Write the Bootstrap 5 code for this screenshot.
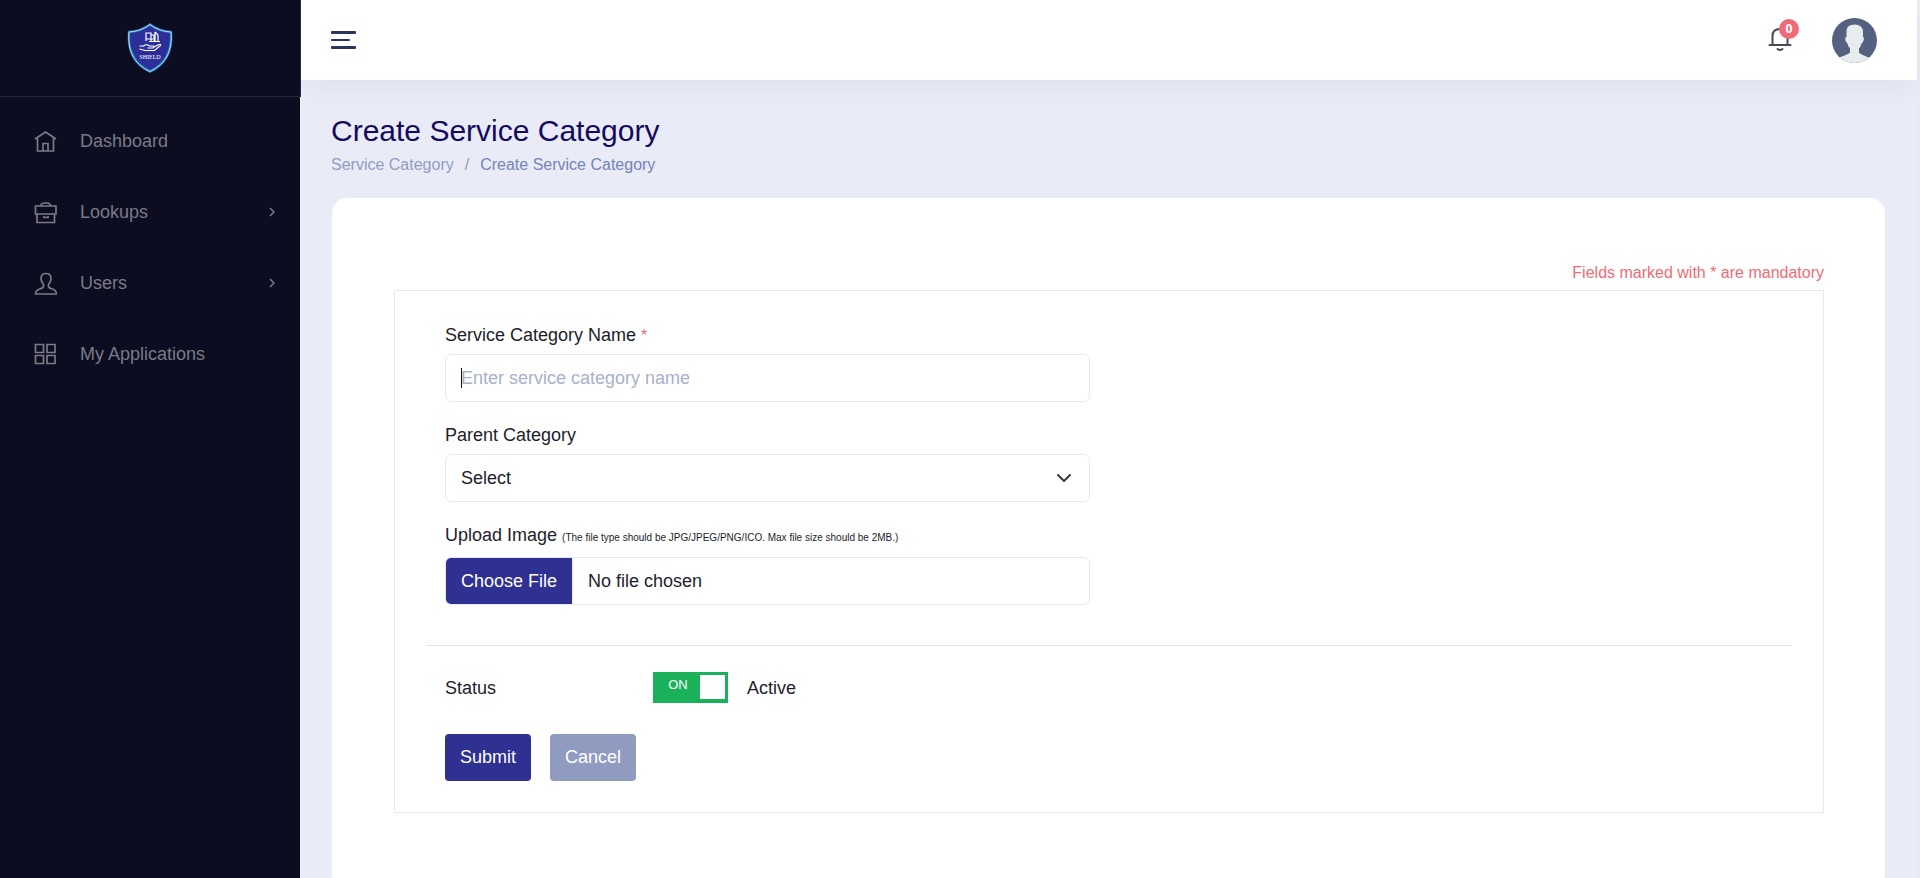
<!DOCTYPE html>
<html lang="en">
<head>
<meta charset="utf-8">
<meta name="viewport" content="width=device-width, initial-scale=1">
<title>Create Service Category</title>
<link href="https://cdn.jsdelivr.net/npm/bootstrap@5.3.0/dist/css/bootstrap.min.css" rel="stylesheet">
<style>
  :root { --brand: #2e3092; --line: #e9e7f7; }
  html { background: #e9e8f6; }
  body { background: #e9e8f6; color: #1d1d2b; font: 18px/24px "Liberation Sans", Arial, sans-serif; padding-right: 3px; }
  a { text-decoration: none; }

  .side { width: 300px; background: #0c0d20; }
  .brand-box { width: 301px; height: 97px; background: #0c0d20; border-right: 1px solid #2b2c3e; border-bottom: 1px solid #25263a; z-index: 2; }
  .side .nav-link { height: 71px; padding: 0 25px 0 33px; color: #7b7b86; }
  .side .nav-link:hover { color: #fff; }
  .side .nav-link svg { fill: none; stroke: currentColor; }
  .side .menu-icon { margin-right: 23px; }

  .page-area { background: #e9ebf7; }
  .topbar { height: 80px; padding: 0 40px 0 31px; background: #fff; box-shadow: 0 16px 28px -8px rgba(40, 40, 70, .05); }
  .count { left: 11px; top: -9px; width: 20px; height: 20px; font: bold 12px/20px "Open Sans", sans-serif; background: #f06b75; }

  .content-area { padding: 33px 32px 0 31px; }
  .page-title { font-size: 30px; line-height: 36px; color: #130a5f; }
  .breadcrumb { --bs-breadcrumb-divider-color: #8f9bc0; --bs-breadcrumb-item-padding-x: 11px; font-size: 16px; margin: 4px 0 21px; }
  .breadcrumb a { color: #919dc2; }
  .breadcrumb .active { color: #7584b8; }

  .panel { border: 0; border-radius: 15px 15px 0 0; padding: 63px 61px 66px 62px; margin-left: 1px; }
  .mandatory { font-size: 16px; color: #f06b75; margin-bottom: 5px; }
  .star { font-size: 16px; line-height: 16px; color: #f06b75; }
  .form-box { border: 1px solid var(--line); padding: 32px 31px 31px; }
  .form-box .row { --bs-gutter-x: 38px; margin: 0; }
  .form-box .field { margin-bottom: 21px; }
  .field-name { display: block; margin-bottom: 7px; }
  .hint { font-size: 10px; line-height: 24px; }
  .form-control, .form-select { height: 48px; padding: 9px 15px; font-size: 18px; line-height: 28px; color: #1d1d2b; border-color: var(--line); border-radius: 6px; }
  .form-control::placeholder { color: #a9b0cb; opacity: 1; }
  .with-caret { background: linear-gradient(#111, #111) 15px center / 1px 20px no-repeat #fff; }
  .form-select { background-position: right 17px center; background-size: 16px 16px; }
  .form-control::file-selector-button { margin: -9px 15px -9px -15px; padding: 9px 15px; background: var(--brand); color: #fff; border-color: var(--line); }
  .form-control:hover:not(:disabled):not([readonly])::file-selector-button { background: #25277c; }
  .divider { margin: 40px 0 26px; border-color: #e2e2e8; opacity: 1; }

  .status-name { width: 208px; }
  .switch-box { width: 75px; height: 31px; padding: 3px; margin-right: 19px; background: #c9ccd8; cursor: pointer; }
  .switch-box::after { content: "OFF"; order: 1; flex: 1; font-size: 13px; line-height: 20px; text-align: center; color: #fff; }
  .switch-box .knob { width: 25px; height: 24px; background: #fff; }
  .btn-check:checked + .switch-box { background: #1ab15a; }
  .btn-check:checked + .switch-box::after { content: "ON"; order: 0; }
  .btn-check:checked + .switch-box .knob { order: 1; }

  .form-actions { gap: 19px; margin-top: 31px; }
  .btn-form { width: 86px; height: 47px; padding: 0; font-size: 18px; border: 0; border-radius: 4px; color: #fff; background: var(--brand); }
  .btn-form.btn-soft { background: #909bc0; }
</style>
</head>
<body class="min-vh-100 d-flex">

<aside class="side flex-shrink-0 d-flex flex-column">
  <a href="#" class="brand-box position-relative d-flex align-items-center justify-content-center" aria-label="Shield home">
    <svg width="50" height="54" viewBox="0 0 50 54">
      <path d="M25 3.500C19 8 12 10.500 4 11C2.500 30 9 43 25 50.500C41 43 47.500 30 46 11C38 10.500 31 8 25 3.500Z" fill="#2c2f9a" stroke="#2473b8" stroke-width="2.500"/>
      <path d="M25 3.500C19 8 12 10.500 4 11C2.500 30 9 43 25 50.500C41 43 47.500 30 46 11C38 10.500 31 8 25 3.500Z" fill="none" stroke="#b5e3f5" stroke-width="1"/>
      <path d="M21 20v-8h5v8M21 18h7M26 14h3v6M30 11v9M33 14v6M30 11l3 3M24 20.500h11" fill="none" stroke="#fff" stroke-width="1.200"/>
      <path d="M14.500 25h4q3-2.500 6 0h4q1.500 1.500-1 2h-5M29 26l5-2.500q2-.5 1.500 1l-6 5H20l-5.500-1.500" fill="none" stroke="#fff" stroke-width="1.200"/>
      <text x="25" y="38" text-anchor="middle" font-family="Liberation Serif, serif" font-size="6" fill="#fff">SHIELD</text>
    </svg>
  </a>
  <nav class="nav flex-column pt-2" aria-label="Main">
    <a class="nav-link d-flex align-items-center" href="#">
      <svg class="menu-icon" width="24" height="24" stroke-width="1.700"><path d="M2 10L12.500 3L23 10M4.500 9v13h16V9M10 22v-7.500h5v7.500"/></svg>
      Dashboard
    </a>
    <a class="nav-link d-flex align-items-center" href="#">
      <svg class="menu-icon" width="24" height="24" stroke-width="1.700"><path d="M2.500 6h20.500v8h-20.500zM4 14v8.500h17.500v-8.500M7.500 6q1-3 4-3h2.500q3 0 4 3M11 16v1.500h4v-1.500"/></svg>
      <span class="flex-grow-1">Lookups</span>
      <svg width="6" height="10" stroke-width="1.500"><path d="M1 1l4 4-4 4"/></svg>
    </a>
    <a class="nav-link d-flex align-items-center" href="#">
      <svg class="menu-icon" width="24" height="24" stroke-width="1.700"><path d="M2.500 23q0-3.500 4-5 4-1 4-2.500v-2Q8 11 8 7.500 8 2.500 13 2.500t5 5q0 3.500-2.500 6v2q0 1.500 4 2.500 4 1.500 4 5z"/></svg>
      <span class="flex-grow-1">Users</span>
      <svg width="6" height="10" stroke-width="1.500"><path d="M1 1l4 4-4 4"/></svg>
    </a>
    <a class="nav-link d-flex align-items-center" href="#">
      <svg class="menu-icon" width="24" height="24" stroke-width="1.700"><path d="M2.500 2.500h8v8h-8zM14 2.500h8v8h-8zM2.500 13.500h8v8h-8zM14 13.500h8v8h-8z"/></svg>
      My Applications
    </a>
  </nav>
</aside>

<div class="page-area flex-grow-1 d-flex flex-column">
  <header class="topbar d-flex align-items-center">
    <button type="button" class="btn border-0 p-0 d-flex" aria-label="Toggle menu">
      <svg width="25" height="18" fill="#2d355c"><rect width="25" height="3" rx="1"/><rect y="8" width="19" height="2" rx="1"/><rect y="15" width="25" height="3" rx="1"/></svg>
    </button>
    <a href="#" class="position-relative d-flex ms-auto me-4" aria-label="Notifications">
      <svg class="me-3" width="24" height="24" fill="none" stroke="#454c55" stroke-width="2" stroke-linecap="round"><path d="M1.500 17h21M4.500 16.500v-8.500q0-7 7.500-7t7.500 7v8.500M9.500 21q2.500 2 5 0"/></svg>
      <span class="count position-absolute rounded-circle text-white text-center">0</span>
    </a>
    <a href="#" class="d-flex" aria-label="Account">
      <svg width="45" height="45" viewBox="0 0 45 45">
        <clipPath id="disc"><circle cx="22.500" cy="22.500" r="22.500"/></clipPath>
        <g clip-path="url(#disc)">
          <path fill="#566081" d="M0 0h45v45H0z"/>
          <path fill="#e7ecec" d="M14.500 14Q14 6.500 22.500 6.500T31 14v5q1.500 0 .5 3.500-.5 2-2 3-.5 3-2.500 5v4q1 1.500 11 5.500V46H7v-6.500q10-3.500 11-5v-4q-2-2-2.500-5-1.500-1-2-3-1-3.500 1-3.500z"/>
        </g>
      </svg>
    </a>
  </header>

  <main class="content-area flex-grow-1 d-flex flex-column">
    <h1 class="page-title fw-normal mb-0">Create Service Category</h1>
    <nav aria-label="breadcrumb">
      <ol class="breadcrumb">
        <li class="breadcrumb-item"><a href="#">Service Category</a></li>
        <li class="breadcrumb-item active" aria-current="page">Create Service Category</li>
      </ol>
    </nav>

    <section class="card panel flex-grow-1">
      <p class="mandatory text-end">Fields marked with * are mandatory</p>
      <form class="form-box">
        <div class="row">
          <div class="col-md-6">
            <div class="field">
              <label class="field-name" for="catName">Service Category Name <span class="star">*</span></label>
              <input type="text" class="form-control with-caret" id="catName" placeholder="Enter service category name">
            </div>
            <div class="field">
              <label class="field-name" for="parentCat">Parent Category</label>
              <select class="form-select" id="parentCat"><option>Select</option></select>
            </div>
            <label class="field-name" for="catImage">Upload Image <span class="hint">(The file type should be JPG/JPEG/PNG/ICO. Max file size should be 2MB.)</span></label>
            <input type="file" class="form-control" id="catImage">
          </div>
        </div>
        <hr class="divider">
        <div class="row">
          <div class="col-12 d-flex align-items-center">
            <span class="status-name">Status</span>
            <input type="checkbox" class="btn-check" id="status" checked>
            <label class="switch-box d-flex" for="status" aria-label="Status"><span class="knob"></span></label>
            <span>Active</span>
          </div>
          <div class="col-12 d-flex form-actions">
            <button type="submit" class="btn btn-form">Submit</button>
            <button type="button" class="btn btn-form btn-soft">Cancel</button>
          </div>
        </div>
      </form>
    </section>
  </main>
</div>

<script src="https://cdn.jsdelivr.net/npm/bootstrap@5.3.0/dist/js/bootstrap.bundle.min.js"></script>
</body>
</html>
